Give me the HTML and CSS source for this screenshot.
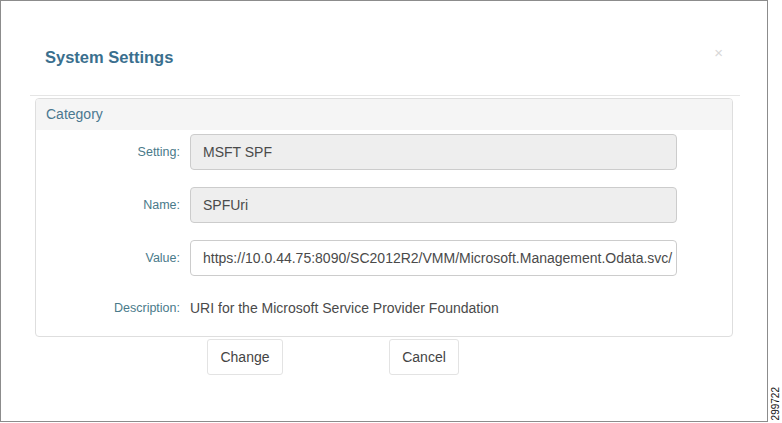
FILE: index.html
```html
<!DOCTYPE html>
<html>
<head>
<meta charset="utf-8">
<link rel="stylesheet" href="styles.css">
</head>
<body>
<div class="page">
  <div class="frame">
    <div class="header">
      <h1 class="title">System Settings</h1>
      <span class="close">×</span>
    </div>
    <div class="panel">
      <div class="panel-heading">Category</div>
      <div class="panel-body">
        <div class="row">
          <label class="label">Setting:</label>
          <div class="input disabled">MSFT SPF</div>
        </div>
        <div class="row">
          <label class="label">Name:</label>
          <div class="input disabled">SPFUri</div>
        </div>
        <div class="row">
          <label class="label">Value:</label>
          <div class="input">https://10.0.44.75:8090/SC2012R2/VMM/Microsoft.Management.Odata.svc/</div>
        </div>
        <div class="row desc-row">
          <label class="label">Description:</label>
          <div class="desc">URI for the Microsoft Service Provider Foundation</div>
        </div>
      </div>
    </div>
    <div class="actions">
      <button class="btn btn-change">Change</button>
      <button class="btn btn-cancel">Cancel</button>
    </div>
  </div>
  <div class="side">
    <span class="fignum">299722</span>
  </div>
</div>
</body>
</html>
```
FILE: styles.css
```css
html, body {
  margin: 0;
  padding: 0;
  background: #fff;
}
body {
  font-family: "Liberation Sans", Arial, sans-serif;
  color: #333;
}
.page {
  display: flex;
  width: 782px;
  height: 423px;
}
.frame {
  width: 768px;
  height: 422px;
  box-sizing: border-box;
  border: 1px solid #8c8c8c;
  display: flex;
  flex-direction: column;
}
.header {
  position: relative;
  height: 95px;
  box-sizing: border-box;
  margin: 0 27px 0 29px;
  padding: 46px 0 0 15px;
  border-bottom: 1px solid #e5e5e5;
}
.title {
  margin: 0;
  font-size: 16.5px;
  line-height: 20px;
  font-weight: bold;
  color: #3a6f8e;
}
.close {
  position: absolute;
  right: 17px;
  top: 43px;
  font-size: 15px;
  color: #d8d8d8;
}
.panel {
  margin: 2px 0 0 34px;
  width: 698px;
  box-sizing: border-box;
  border: 1px solid #dedede;
  border-radius: 4px;
  overflow: hidden;
}
.panel-heading {
  height: 31px;
  line-height: 31px;
  padding-left: 10px;
  background: #f5f5f5;
  font-size: 14px;
  color: #4a7890;
}
.panel-body {
  padding: 4px 0 13px 0;
  display: flex;
  flex-direction: column;
  gap: 17px;
}
.row {
  display: flex;
  align-items: center;
  gap: 10px;
}
.label {
  width: 144px;
  text-align: right;
  font-size: 12.5px;
  color: #4a7a8a;
}
.input {
  width: 487px;
  height: 36px;
  box-sizing: border-box;
  border: 1px solid #cccccc;
  border-radius: 4px;
  padding: 0 0 0 12px;
  line-height: 34px;
  font-size: 14px;
  color: #4a4a4a;
  background: #fff;
  white-space: nowrap;
  overflow: hidden;
}
.input.disabled {
  background: #eeeeee;
}
.desc-row {
  height: 30px;
}
.desc {
  font-size: 14px;
  color: #4a4a4a;
}
.actions {
  display: flex;
  margin: 2px 0 0 206px;
  gap: 106px;
}
.btn {
  height: 36px;
  box-sizing: border-box;
  border: 1px solid #e3e3e3;
  border-radius: 3px;
  background: #fff;
  font-family: "Liberation Sans", Arial, sans-serif;
  font-size: 14px;
  color: #444;
  padding: 0;
}
.btn-change {
  width: 76px;
}
.btn-cancel {
  width: 70px;
}
.side {
  flex: 1;
  display: flex;
  align-items: flex-end;
  justify-content: center;
  padding-bottom: 3px;
}
.fignum {
  writing-mode: vertical-rl;
  transform: rotate(180deg);
  font-size: 10px;
  line-height: 11px;
  color: #111;
}
```
